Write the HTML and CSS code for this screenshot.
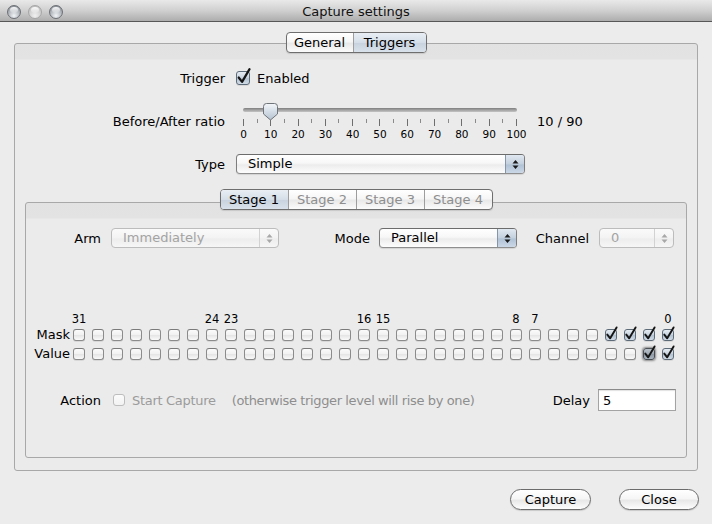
FILE: index.html
```html
<!DOCTYPE html>
<html>
<head>
<meta charset="utf-8">
<title>Capture settings</title>
<link rel="stylesheet" href="styles.css">
</head>
<body>
<svg class="defs" width="0" height="0" aria-hidden="true">
  <defs>
    <linearGradient id="thumbGrad" x1="0" y1="0" x2="0" y2="1">
      <stop offset="0" stop-color="#f4f7fa"/>
      <stop offset="0.5" stop-color="#d3dce6"/>
      <stop offset="1" stop-color="#b4c2d1"/>
    </linearGradient>
  </defs>
</svg>
<div class="window">
  <div class="titlebar">
    <div class="lights">
      <span class="light"></span><span class="light dim"></span><span class="light"></span>
    </div>
    <div class="title">Capture settings</div>
    <div></div>
  </div>

  <div class="content">
    <div class="seg top-tabs">
      <span class="seg-item w-general">General</span>
      <span class="seg-item w-triggers sel">Triggers</span>
    </div>

    <div class="panel outer">
      <div class="form-row row-trigger">
        <div class="flabel">Trigger</div>
        <div class="fctl">
          <span class="cb big on"><svg class="tick" viewBox="0 0 12 12"><path d="M2.3 5.6 L5.2 9.3 L11.6 -1.6"/></svg></span>
          <span class="cb-text">Enabled</span>
        </div>
      </div>

      <div class="form-row row-slider">
        <div class="flabel">Before/After ratio</div>
        <div class="fctl">
          <div class="slider">
            <div class="track-area">
              <div class="track"></div>
              <svg class="thumb" style="left: calc(10% - 8px)" viewBox="0 0 17 18" width="17" height="18">
                <path d="M1.5 3.5 Q1.5 0.5 4.5 0.5 H12.5 Q15.5 0.5 15.5 3.5 V11 L8.5 17 L1.5 11 Z" fill="url(#thumbGrad)" stroke="#6f7478" stroke-width="1"/>
              </svg>
            </div>
            <div class="ticks">
              <i class="maj"></i><i></i><i class="maj"></i><i></i><i class="maj"></i><i></i><i class="maj"></i><i></i><i class="maj"></i><i></i><i class="maj"></i><i></i><i class="maj"></i><i></i><i class="maj"></i><i></i><i class="maj"></i><i></i><i class="maj"></i><i></i><i class="maj"></i>
            </div>
            <div class="ticklabels">
              <span><b>0</b></span><span><b>10</b></span><span><b>20</b></span><span><b>30</b></span><span><b>40</b></span><span><b>50</b></span><span><b>60</b></span><span><b>70</b></span><span><b>80</b></span><span><b>90</b></span><span><b>100</b></span>
            </div>
          </div>
          <span class="ratio">10 / 90</span>
        </div>
      </div>

      <div class="form-row row-type">
        <div class="flabel">Type</div>
        <div class="fctl">
          <div class="popup w-type"><span class="popup-text">Simple</span><span class="popup-arrows"><svg viewBox="0 0 7 11" width="7" height="11"><path d="M3.5 1 L6.5 4.5 H0.5 Z M3.5 10 L6.5 6.5 H0.5 Z"/></svg></span></div>
        </div>
      </div>

      <div class="seg stage-tabs">
        <span class="seg-item w-stage sel">Stage 1</span>
        <span class="seg-item w-stage dim">Stage 2</span>
        <span class="seg-item w-stage dim">Stage 3</span>
        <span class="seg-item w-stage dim">Stage 4</span>
      </div>

      <div class="panel inner">
        <div class="sel-row">
          <span class="slabel l1">Arm</span>
          <div class="popup disabled"><span class="popup-text">Immediately</span><span class="popup-arrows"><svg viewBox="0 0 7 11" width="7" height="11"><path d="M3.5 1 L6.5 4.5 H0.5 Z M3.5 10 L6.5 6.5 H0.5 Z"/></svg></span></div>
          <span class="slabel l2">Mode</span>
          <div class="popup"><span class="popup-text">Parallel</span><span class="popup-arrows"><svg viewBox="0 0 7 11" width="7" height="11"><path d="M3.5 1 L6.5 4.5 H0.5 Z M3.5 10 L6.5 6.5 H0.5 Z"/></svg></span></div>
          <span class="slabel l3">Channel</span>
          <div class="popup disabled"><span class="popup-text">0</span><span class="popup-arrows"><svg viewBox="0 0 7 11" width="7" height="11"><path d="M3.5 1 L6.5 4.5 H0.5 Z M3.5 10 L6.5 6.5 H0.5 Z"/></svg></span></div>
        </div>

        <div class="bitrow nums">
          <span></span>
          <span class="n">31</span><span></span><span></span><span></span><span></span><span></span><span></span><span class="n">24</span>
          <span class="n">23</span><span></span><span></span><span></span><span></span><span></span><span></span><span class="n">16</span>
          <span class="n">15</span><span></span><span></span><span></span><span></span><span></span><span></span><span class="n">8</span>
          <span class="n">7</span><span></span><span></span><span></span><span></span><span></span><span></span><span class="n">0</span>
        </div>
        <div class="bitrow mask">
          <span class="blabel">Mask</span>
          <span class="cb"></span><span class="cb"></span><span class="cb"></span><span class="cb"></span><span class="cb"></span><span class="cb"></span><span class="cb"></span><span class="cb"></span>
          <span class="cb"></span><span class="cb"></span><span class="cb"></span><span class="cb"></span><span class="cb"></span><span class="cb"></span><span class="cb"></span><span class="cb"></span>
          <span class="cb"></span><span class="cb"></span><span class="cb"></span><span class="cb"></span><span class="cb"></span><span class="cb"></span><span class="cb"></span><span class="cb"></span>
          <span class="cb"></span><span class="cb"></span><span class="cb"></span><span class="cb"></span>
          <span class="cb on"><svg class="tick" viewBox="0 0 12 12"><path d="M2.3 5.6 L5.2 9.3 L11.6 -1.6"/></svg></span>
          <span class="cb on"><svg class="tick" viewBox="0 0 12 12"><path d="M2.3 5.6 L5.2 9.3 L11.6 -1.6"/></svg></span>
          <span class="cb on"><svg class="tick" viewBox="0 0 12 12"><path d="M2.3 5.6 L5.2 9.3 L11.6 -1.6"/></svg></span>
          <span class="cb on"><svg class="tick" viewBox="0 0 12 12"><path d="M2.3 5.6 L5.2 9.3 L11.6 -1.6"/></svg></span>
        </div>
        <div class="bitrow value">
          <span class="blabel">Value</span>
          <span class="cb"></span><span class="cb"></span><span class="cb"></span><span class="cb"></span><span class="cb"></span><span class="cb"></span><span class="cb"></span><span class="cb"></span>
          <span class="cb"></span><span class="cb"></span><span class="cb"></span><span class="cb"></span><span class="cb"></span><span class="cb"></span><span class="cb"></span><span class="cb"></span>
          <span class="cb"></span><span class="cb"></span><span class="cb"></span><span class="cb"></span><span class="cb"></span><span class="cb"></span><span class="cb"></span><span class="cb"></span>
          <span class="cb"></span><span class="cb"></span><span class="cb"></span><span class="cb"></span><span class="cb"></span><span class="cb"></span>
          <span class="cb on pressed"><svg class="tick" viewBox="0 0 12 12"><path d="M2.3 5.6 L5.2 9.3 L11.6 -1.6"/></svg></span>
          <span class="cb on"><svg class="tick" viewBox="0 0 12 12"><path d="M2.3 5.6 L5.2 9.3 L11.6 -1.6"/></svg></span>
        </div>

        <div class="action-row">
          <span class="alabel">Action</span>
          <span class="cb dis"></span>
          <span class="dim-text start">Start Capture</span>
          <span class="dim-text note">(otherwise trigger level will rise by one)</span>
          <span class="spacer"></span>
          <span class="dlabel">Delay</span>
          <span class="textfield">5</span>
        </div>
      </div>
    </div>

    <div class="buttons">
      <span class="button w-capture">Capture</span>
      <span class="button w-close">Close</span>
    </div>
  </div>
</div>
</body>
</html>
```

FILE: styles.css
```css
* { box-sizing: border-box; }
html, body { margin: 0; padding: 0; }
body {
  width: 712px;
  height: 524px;
  overflow: hidden;
  background: #ececec;
  font-family: "DejaVu Sans", "Liberation Sans", sans-serif;
  font-size: 13px;
  color: #000;
}
.defs { position: absolute; width: 0; height: 0; }

.window { display: flex; flex-direction: column; height: 524px; }

/* title bar */
.titlebar {
  height: 22px;
  flex: none;
  display: grid;
  grid-template-columns: 1fr auto 1fr;
  align-items: center;
  background: linear-gradient(#e9e9e9, #d0d0d0 50%, #adadad);
  border-bottom: 1px solid #575757;
}
.lights { display: flex; gap: 7px; padding-left: 7px; padding-top: 1px; }
.light {
  width: 14px; height: 14px; border-radius: 50%;
  position: relative;
  border: 1px solid #6c6f74;
  background: radial-gradient(circle at 50% 80%, #f2f4f6 0%, #b9bec4 45%, #7c828a 100%);
}
.light::after {
  content: "";
  position: absolute;
  left: 2px; right: 2px; top: 1px; height: 6px;
  border-radius: 50%;
  background: linear-gradient(rgba(255,255,255,0.95), rgba(255,255,255,0.15));
}
.light.dim {
  border-color: #a6a6a6;
  background: radial-gradient(circle at 50% 80%, #f0f0f0 0%, #d2d2d2 50%, #b4b4b4 100%);
}
.title { font-size: 13px; color: #111; line-height: 22px; padding-top: 1px; }

/* content */
.content { flex: 1; padding: 10px 14px 0 14px; display: flex; flex-direction: column; }

/* segmented tabs */
.seg {
  display: flex;
  align-self: center;
  height: 21px;
  border: 1px solid #6e6e6e;
  border-radius: 4px;
  overflow: hidden;
  position: relative;
  z-index: 1;
  background: linear-gradient(#ffffff, #f6f6f6 45%, #e9e9e9 55%, #fbfbfb);
  box-shadow: 0 1px 1px rgba(0,0,0,0.12);
}
.seg-item {
  display: flex; align-items: center; justify-content: center;
  height: 100%;
  border-left: 1px solid #9d9d9d;
  line-height: 1;
  padding-bottom: 1px;
}
.seg-item:first-child { border-left: 0; }
.seg-item.sel { background: linear-gradient(#e9eef4, #d5dee8 50%, #c8d3df 55%, #d9e2eb); }
.seg-item.dim { color: #8e8e8e; }
.top-tabs { margin-bottom: -10px; }
.w-general { width: 66px; }
.w-triggers { width: 73px; }
.w-stage { width: 68px; }
.w-stage:first-child { width: 67px; }

/* panels */
.panel {
  border: 1px solid #a8a8a8;
  border-radius: 3px;
  background: linear-gradient(#e2e2e2 0, #e3e3e3 15px, #ebebeb 16px, #ebebeb);
}
.outer {
  height: 428px;
  padding-top: 24px;
  display: flex;
  flex-direction: column;
}

/* form rows in outer panel */
.form-row { display: grid; grid-template-columns: 210px 1fr; column-gap: 11px; align-items: center; }
.flabel { text-align: right; }
.fctl { display: flex; align-items: center; }
.row-trigger { height: 20px; }
.row-slider { height: 40px; margin-top: 13px; }
.row-type { height: 20px; margin-top: 13px; }

.cb-text { margin-left: 7px; }

/* slider */
.slider { width: 290px; padding-left: 7px; padding-right: 9px; }
.track-area { position: relative; height: 18px; }
.track {
  position: absolute; left: 0; right: 0; top: 7px; height: 4px;
  border-radius: 2px;
  background: linear-gradient(#7e7e7e, #a2a2a2 50%, #c4c4c4);
}
.thumb { position: absolute; top: 2px; overflow: visible; }
.ticks {
  height: 8px; display: flex; justify-content: space-between; align-items: flex-start;
}
.ticks i { width: 1px; height: 4px; background: #8a8a8a; }
.ticks i.maj { height: 7px; background: #6e6e6e; }
.ticklabels { display: flex; justify-content: space-between; height: 14px; }
.ticklabels span { width: 1px; display: flex; justify-content: center; }
.ticklabels b { font-weight: normal; font-size: 10.5px; line-height: 14px; white-space: nowrap; }
.ratio { margin-left: 11px; }

/* popups */
.popup {
  height: 20px;
  display: flex;
  align-items: stretch;
  border: 1px solid #7d7d7d;
  border-top-color: #6c6c6c;
  border-bottom-color: #8e8e8e;
  border-radius: 4px;
  overflow: hidden;
  background: linear-gradient(#ffffff, #f7f7f7 45%, #ececec 55%, #fdfdfd);
  box-shadow: 0 1px 1px rgba(0,0,0,0.1);
}
.w-type { width: 289px; }
.popup-text { flex: 1; padding-left: 11px; display: flex; align-items: center; line-height: 1; padding-bottom: 1px; white-space: nowrap; }
.popup-arrows {
  width: 19px;
  display: flex; align-items: center; justify-content: center;
  border-left: 1px solid #8596ab;
  background: linear-gradient(#e0e8f1, #c3d0de 50%, #b1c2d6 55%, #cbd8e7);
}
.popup-arrows svg { fill: #1a1a1a; }
.popup.disabled {
  border-color: #bcbcbc;
  background: linear-gradient(#fafafa, #f3f3f3 50%, #ededed 55%, #f6f6f6);
  box-shadow: none;
}
.popup.disabled .popup-text { color: #a3a3a3; }
.popup.disabled .popup-arrows { border-left-color: #d2d2d2; background: transparent; }
.popup.disabled .popup-arrows svg { fill: #a8a8a8; }

/* stage tabs */
.stage-tabs { margin-top: 15px; margin-bottom: -8px; }

.inner {
  flex: 1;
  margin: 0 10px 12px 10px;
  display: flex;
  flex-direction: column;
}

.sel-row {
  margin-top: 25px;
  display: grid;
  grid-template-columns: 85px 168px 100px 138px 82px 75px;
  align-items: center;
}
.slabel { text-align: right; padding-right: 10px; }
.slabel.l2 { padding-right: 9px; }

/* bits */
.bitrow {
  display: grid;
  grid-template-columns: 40px repeat(32, 12px);
  column-gap: 7px;
  height: 14px;
  align-items: center;
}
.bitrow.nums { margin-top: 64px; }
.bitrow.mask { margin-top: 1px; }
.bitrow.value { margin-top: 5px; }
.bitrow .n { display: flex; justify-content: center; font-size: 11.5px; line-height: 14px; white-space: nowrap; }
.blabel { text-align: right; margin-right: -4px; white-space: nowrap; }

.cb {
  width: 12px; height: 12px;
  display: inline-block;
  position: relative;
  border: 1px solid #8b8b8b;
  border-top-color: #7a7a7a;
  border-radius: 3px;
  background: linear-gradient(#fbfbfb, #f1f1f1 50%, #e6e6e6 55%, #fafafa);
  box-shadow: 0 1px 0 rgba(0,0,0,0.08);
}
.cb.on {
  border-color: #5d6b79;
  background: linear-gradient(#e6ecf2, #c7d2de 50%, #b5c3d2 55%, #d0dbe6);
}
.cb.pressed {
  border-color: #4a4f55;
  background: linear-gradient(#b9c0c8, #9ea8b3 50%, #8f9aa6 55%, #aab4bf);
  box-shadow: 0 0 2px 1px rgba(60,60,60,0.55);
}
.cb.big { width: 14px; height: 14px; }
.tick {
  position: absolute;
  left: -1px; top: -1px;
  width: 12px; height: 12px;
  overflow: visible;
  fill: none;
  stroke: #151515;
  stroke-width: 1.9;
  stroke-linecap: round;
  stroke-linejoin: round;
}
.cb.big .tick { width: 14px; height: 14px; }
.cb.dis { border-color: #bdbdbd; background: linear-gradient(#fbfbfb, #f2f2f2); box-shadow: none; }

/* action row */
.action-row {
  margin-top: 29px;
  height: 22px;
  display: flex;
  align-items: center;
  padding-right: 10px;
}
.alabel { width: 75px; text-align: right; }
.action-row .cb { margin-left: 12px; }
.dim-text { color: #9b9b9b; white-space: nowrap; }
.start { margin-left: 7px; letter-spacing: -0.3px; }
.note { margin-left: 16px; color: #8e8e8e; letter-spacing: -0.38px; }
.spacer { flex: 1; }
.dlabel { margin-right: 8px; }
.textfield {
  width: 78px; height: 22px;
  background: #fff;
  border: 1px solid #a3a3a3;
  border-top-color: #8a8a8a;
  box-shadow: inset 0 1px 1px rgba(0,0,0,0.12);
  padding-left: 4px;
  display: flex; align-items: center;
  line-height: 1;
}

/* buttons */
.buttons {
  margin-top: 18px;
  display: flex;
  justify-content: flex-end;
  gap: 28px;
  margin-right: -1px;
}
.button {
  height: 21px;
  display: flex; align-items: center; justify-content: center;
  border: 1px solid #6b6b6b;
  border-radius: 11px;
  background: linear-gradient(#ffffff, #f6f6f6 45%, #e8e8e8 55%, #fdfdfd);
  box-shadow: 0 1px 1px rgba(0,0,0,0.15);
  line-height: 1;
  padding-bottom: 1px;
}
.w-capture { width: 81px; }
.w-close { width: 80px; }
```
